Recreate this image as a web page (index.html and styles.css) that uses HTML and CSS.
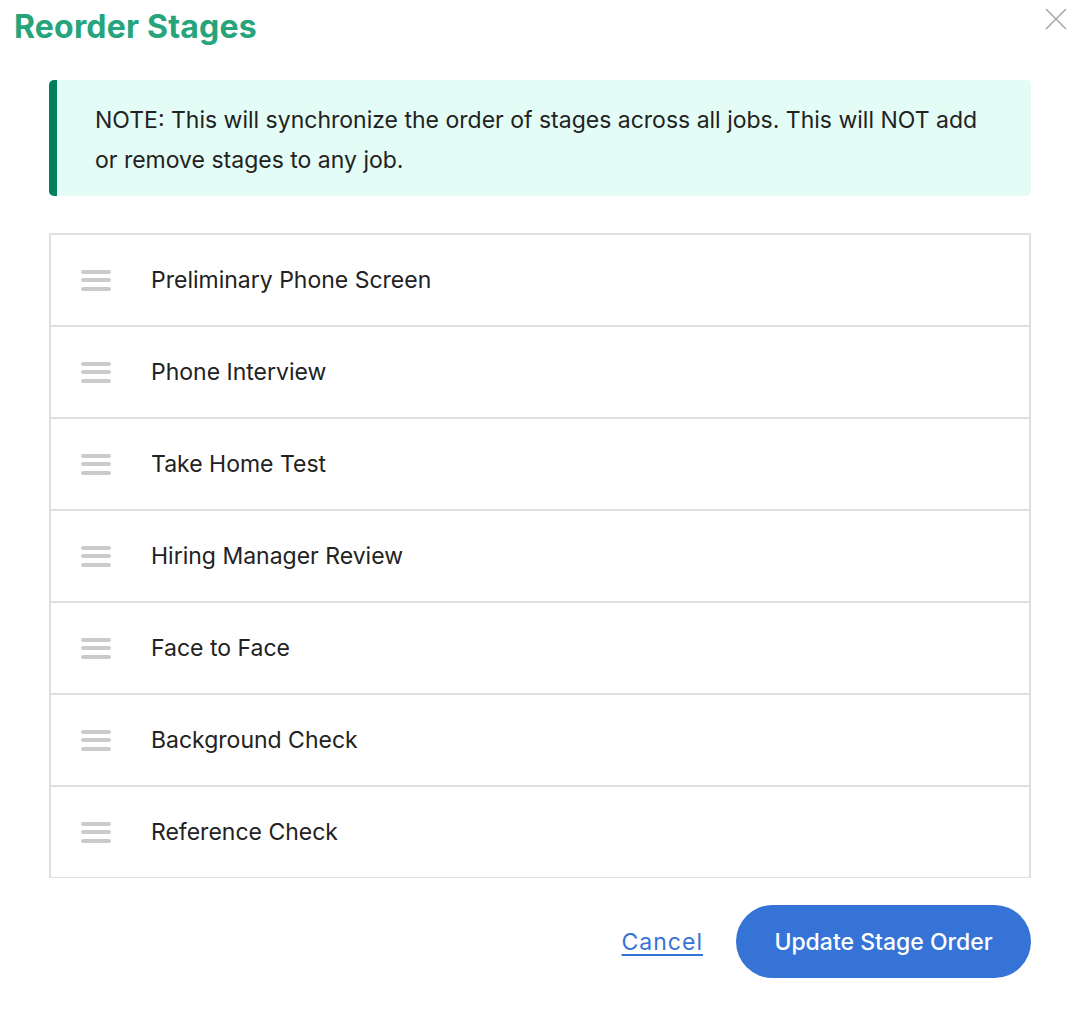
FILE: index.html
```html
<!DOCTYPE html>
<html lang="en">
<head>
    <meta charset="UTF-8">
    <meta name="viewport" content="width=device-width, initial-scale=1.0">
    <title>Reorder Stages</title>
    <link rel="stylesheet" href="styles.css">
</head>
<body>
    <div class="modal">
        <div class="modal-header">
            <h1>Reorder Stages</h1>
            <button class="close-btn" aria-label="Close">
                <svg width="22" height="22" viewBox="0 0 22 22">
                    <path d="M1 1 L21 21 M21 1 L1 21" stroke="#a8a8a8" stroke-width="1.6" fill="none"/>
                </svg>
            </button>
        </div>

        <div class="modal-body">
            <div class="note">
                NOTE: This will synchronize the order of stages across all jobs. This will NOT add
                or remove stages to any job.
            </div>

            <ul class="stage-list">
                <li class="stage"><span class="handle"><i></i><i></i><i></i></span>Preliminary Phone Screen</li>
                <li class="stage"><span class="handle"><i></i><i></i><i></i></span>Phone Interview</li>
                <li class="stage"><span class="handle"><i></i><i></i><i></i></span>Take Home Test</li>
                <li class="stage"><span class="handle"><i></i><i></i><i></i></span>Hiring Manager Review</li>
                <li class="stage"><span class="handle"><i></i><i></i><i></i></span>Face to Face</li>
                <li class="stage"><span class="handle"><i></i><i></i><i></i></span>Background Check</li>
                <li class="stage"><span class="handle"><i></i><i></i><i></i></span>Reference Check</li>
            </ul>

            <div class="modal-footer">
                <a href="#" class="cancel-link">Cancel</a>
                <button class="primary-btn">Update Stage Order</button>
            </div>
        </div>
    </div>
</body>
</html>
```

FILE: styles.css
```css
body {
    margin: 0;
    font-family: Inter, "Noto Sans", sans-serif;
    background-color: #fff;
    color: #222;
}

.modal {
    width: 1076px;
}

.modal-header {
    display: flex;
    justify-content: space-between;
    align-items: flex-start;
    padding: 8px 9px 0 14px;
}

h1 {
    margin: 0;
    font-size: 32px;
    font-weight: 700;
    line-height: 38px;
    color: #26a47c;
    letter-spacing: 0.2px;
}

.close-btn {
    border: none;
    background: none;
    padding: 0;
    cursor: pointer;
}

.modal-body {
    padding: 34px 45px 0 49px;
}

.note {
    background-color: #e3fcf6;
    border-left: 8px solid #00805c;
    border-radius: 5px;
    padding: 20px 40px 16px 38px;
    font-size: 23px;
    line-height: 40px;
    color: #222;
}

.stage-list {
    list-style: none;
    margin: 37px 0 0 0;
    padding: 0;
    border: 2px solid #e0e0e0;
    border-bottom-width: 1px;
}

.stage {
    display: flex;
    align-items: center;
    height: 90px;
    border-bottom: 2px solid #e0e0e0;
    font-size: 23px;
    color: #222;
}

.stage:last-child {
    border-bottom: none;
}

.handle {
    display: flex;
    flex-direction: column;
    gap: 4.5px;
    width: 30px;
    margin: 0 40px 0 30px;
}

.handle i {
    display: block;
    height: 4px;
    border-radius: 2px;
    background-color: #cbcbcb;
    filter: blur(0.7px);
}

.modal-footer {
    display: flex;
    justify-content: flex-end;
    align-items: center;
    gap: 33px;
    margin-top: 27px;
}

.cancel-link {
    font-size: 23px;
    letter-spacing: 1px;
    color: #3574d6;
    text-decoration: underline;
    text-underline-offset: 4px;
}

.primary-btn {
    width: 295px;
    height: 73px;
    border: none;
    border-radius: 37px;
    background-color: #3574d6;
    color: #fff;
    font-family: inherit;
    font-size: 23px;
    font-weight: 500;
    cursor: pointer;
}
```
